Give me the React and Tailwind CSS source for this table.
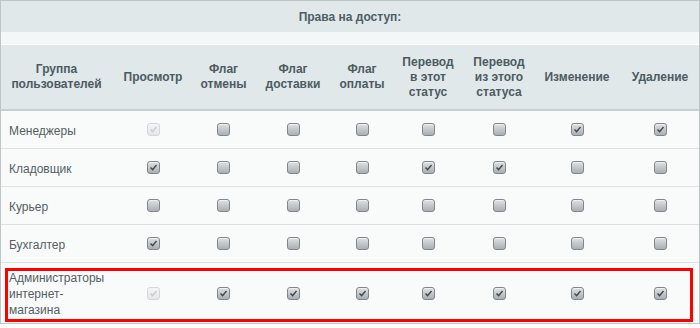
import React from "react";

const cols = "grid grid-cols-[111px_82px_59px_80px_58px_74px_68px_88px_78px]";

const headers = [
  ["Группа", "пользователей"],
  ["Просмотр"],
  ["Флаг", "отмены"],
  ["Флаг", "доставки"],
  ["Флаг", "оплаты"],
  ["Перевод", "в этот", "статус"],
  ["Перевод", "из этого", "статуса"],
  ["Изменение"],
  ["Удаление"],
];

// 0 = пусто, 1 = отмечено, 2 = отмечено и недоступно
const rows = [
  { name: ["Менеджеры"], perms: [2, 0, 0, 0, 0, 0, 1, 1] },
  { name: ["Кладовщик"], perms: [1, 0, 0, 0, 1, 1, 0, 0] },
  { name: ["Курьер"], perms: [0, 0, 0, 0, 0, 0, 0, 0] },
  { name: ["Бухгалтер"], perms: [1, 0, 0, 0, 0, 0, 0, 0] },
  { name: ["Администраторы", "интернет-", "магазина"], perms: [2, 1, 1, 1, 1, 1, 1, 1], marked: true },
];

const Checkbox = ({ state }) => {
  if (state === 2) {
    return (
      <span className="flex h-[13px] w-[13px] items-center justify-center rounded-[3px] border border-[#d3d7d9] bg-gradient-to-b from-[#f4f5f6] to-[#e4e7e8]">
        <svg width="9" height="9" viewBox="0 0 9 9">
          <path d="M1.5 4.5 L3.6 6.6 L7.5 2" fill="none" stroke="#c7cccf" strokeWidth="1.4" />
        </svg>
      </span>
    );
  }
  return (
    <span className="flex h-[13px] w-[13px] items-center justify-center rounded-[3px] border border-[#7f878b] bg-gradient-to-b from-[#dfe2e3] to-[#a9afb2] shadow-[inset_0_1px_0_#eef0f1]">
      {state === 1 && (
        <svg width="9" height="9" viewBox="0 0 9 9">
          <path d="M1.5 4.5 L3.6 6.6 L7.5 2" fill="none" stroke="#43484b" strokeWidth="1.4" />
        </svg>
      )}
    </span>
  );
};

export default function App() {
  return (
    <div className="h-[328px] w-[700px] bg-white font-['Liberation_Sans',Arial,sans-serif] text-[12px]">
      <div className="border border-[#bfc6c8]">
        <div className="flex h-[31px] items-center justify-center bg-[#e1e8ea] font-bold text-[#4c5f65]">
          Права на доступ:
        </div>
        <div className="h-[13px] border-b border-white bg-[#f3f7f7]" />
        <div className={`${cols} h-[66px] border-b-2 border-[#c8cfd1] bg-[#e1e8ea] font-bold leading-[15px] text-[#4b5b61]`}>
          {headers.map((h, i) => (
            <div key={i} className="flex flex-col items-center justify-center text-center">
              {h.map((line) => (
                <span key={line}>{line}</span>
              ))}
            </div>
          ))}
        </div>
        {rows.map((row, r) => (
          <div
            key={r}
            className={`${cols} relative bg-[#f9fbfb] text-[#535e62] ${
              row.marked ? "h-[60px]" : "h-[38px] border-b border-[#dbe2e4]"
            }`}
          >
            <div className="flex flex-col justify-center pl-[8px] pt-[2px] leading-[16px]">
              {row.name.map((line) => (
                <span key={line}>{line}</span>
              ))}
            </div>
            {row.perms.map((p, i) => (
              <div key={i} className="flex items-center justify-center">
                <Checkbox state={p} />
              </div>
            ))}
            {row.marked && (
              <div className="pointer-events-none absolute left-[4px] right-[6px] top-[5px] bottom-[1px] border-[3px] border-[#ff0000]" />
            )}
          </div>
        ))}
      </div>
    </div>
  );
}
